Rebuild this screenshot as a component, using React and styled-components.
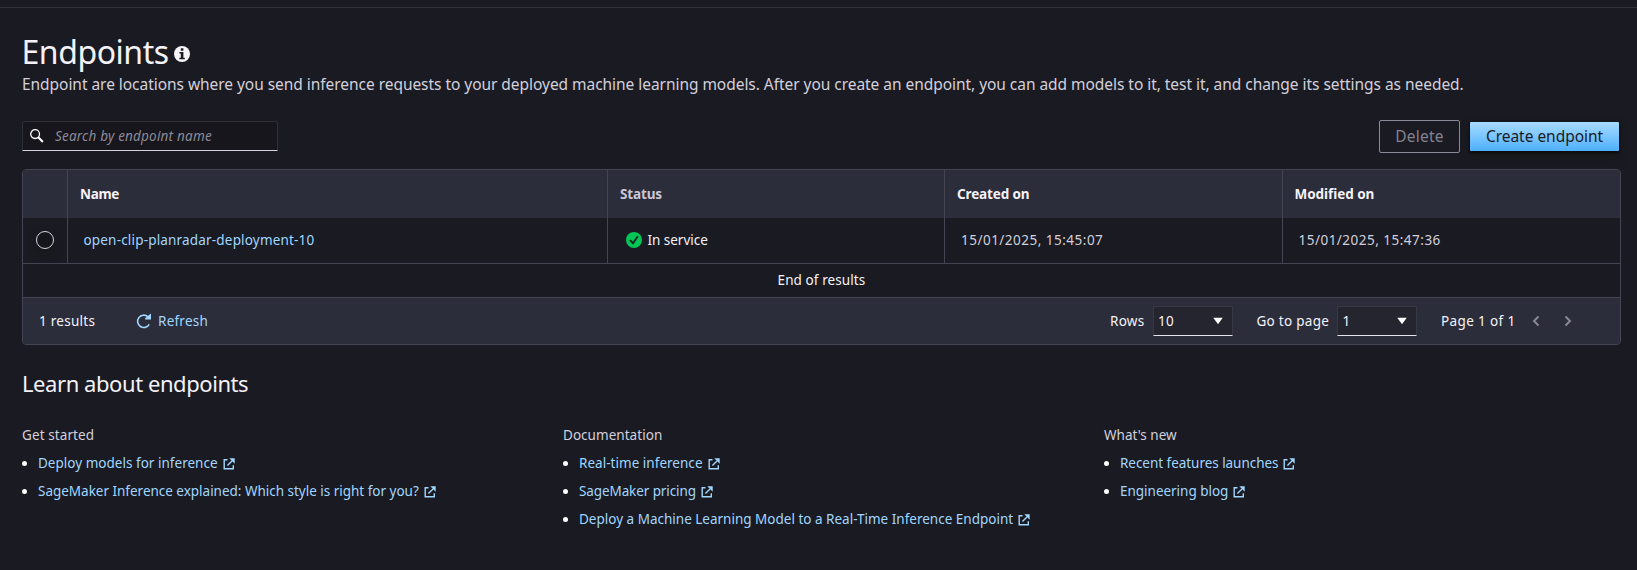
import React from "react";
import styled, { createGlobalStyle } from "styled-components";

const GlobalStyle = createGlobalStyle`
  * { box-sizing: border-box; }
  body {
    margin: 0;
    background: #1a1b22;
    color: #f4f2f8;
    font-family: "Noto Sans", "Open Sans", sans-serif;
    font-size: 13.5px;
  }
  ul { list-style: none; margin: 0; padding: 0; }
  h1, h2, h3, p { margin: 0; font-weight: 400; }
`;

const Text = styled.span`
  white-space: nowrap;
  letter-spacing: ${(p) => p.$track || 0}px;
`;

const Page = styled.div`
  min-height: 570px;
  overflow: hidden;
`;

const TopBar = styled.div`
  height: 8px;
  border-bottom: 1px solid #303136;
`;

const Content = styled.main`
  padding: 24px 16px 0 22px;
`;

const TitleRow = styled.div`
  display: flex;
  align-items: center;
  height: 40px;
  svg { margin-top: 4px; }
`;

const Title = styled.h1`
  width: 152px;
  font-size: 32px;
  line-height: 40px;
  letter-spacing: -0.45px;
  margin-left: -0.5px;
  white-space: nowrap;
`;

const Description = styled.p`
  font-size: 15.5px;
  line-height: 24px;
  letter-spacing: -0.044px;
  white-space: nowrap;
  color: #d3cfdc;
`;

const Toolbar = styled.div`
  display: flex;
  align-items: center;
  justify-content: space-between;
  height: 33px;
  margin: 24px 2px 16px 0;
`;

const SearchBox = styled.label`
  display: flex;
  align-items: center;
  gap: 11px;
  width: 256px;
  height: 30px;
  margin-bottom: 1px;
  padding: 0 7px;
  background: #16161c;
  border: 1px solid #303036;
  border-bottom-color: #d6d2de;
  border-radius: 2px 2px 0 0;
`;

const SearchInput = styled.input`
  flex: 1;
  min-width: 0;
  padding: 0;
  border: 0;
  outline: 0;
  background: transparent;
  color: #f4f2f8;
  font: inherit;
  &::placeholder {
    color: #8c8998;
    opacity: 1;
    font-style: italic;
    letter-spacing: ${(p) => p.$track}px;
  }
`;

const Actions = styled.div`
  display: flex;
  align-items: center;
  gap: 10px;
`;

const Button = styled.button`
  padding: 0 0 2px;
  font: inherit;
  font-size: 15.5px;
  white-space: nowrap;
`;

const DeleteButton = styled(Button)`
  width: 81px;
  height: 33px;
  background: transparent;
  border: 1px solid #8c8998;
  border-radius: 2px;
  color: #848191;
  letter-spacing: 0.2px;
`;

const CreateButton = styled(Button)`
  width: 149px;
  height: 29px;
  border: 0;
  border-radius: 1px;
  background: linear-gradient(#a6dbff, #4fb0ff);
  color: #1a1b22;
  letter-spacing: -0.03px;
  box-shadow: 0 1px 2px 1px #0b0c10, 0 6px 10px rgba(20, 22, 22, 0.7);
`;

const Table = styled.section`
  width: 1599px;
  border: 1px solid #454453;
  border-radius: 4px;
  overflow: hidden;
`;

const TableRow = styled.div`
  display: grid;
  grid-template-columns: 45px 540px 337px 338px 1fr;
  height: ${(p) => (p.$head ? 48 : 46)}px;
  background: ${(p) => (p.$head ? "#2c2d3a" : "transparent")};
  border-bottom: ${(p) => (p.$head ? 0 : "1px solid #454453")};
`;

const Cell = styled.div`
  display: flex;
  align-items: center;
  padding: 0 0 ${(p) => p.$lift || 0}px ${(p) => p.$indent || 0}px;
  border-right: 1px solid #454453;
  color: ${(p) => p.$color || "inherit"};
  font-weight: ${(p) => (p.$bold ? 700 : 400)};
  &:last-child { border-right: 0; }
`;

const Status = styled.span`
  display: flex;
  align-items: center;
  gap: 5.5px;
`;

const Radio = styled.span`
  width: 18px;
  height: 18px;
  border: 1px solid #d9d5e1;
  border-radius: 50%;
  background: #15161a;
  box-shadow: 0 6px 8px rgba(22, 23, 24, 0.8);
`;

const EndRow = styled.div`
  display: flex;
  align-items: center;
  justify-content: center;
  height: 34px;
  padding-bottom: 1px;
  border-bottom: 1px solid #454453;
`;

const Footer = styled.footer`
  display: flex;
  align-items: center;
  justify-content: space-between;
  height: 46px;
  padding: 0 48px 0 16px;
  background: #2c2d3a;
`;

const FooterGroup = styled.div`
  display: flex;
  align-items: center;
`;

const Results = styled.span`
  width: 97px;
  letter-spacing: 0.27px;
`;

const Refresh = styled.span`
  display: flex;
  align-items: center;
  gap: 6px;
  color: #a1d6ff;
  letter-spacing: 0.24px;
`;

const Label = styled.span`
  width: ${(p) => p.$w}px;
  letter-spacing: ${(p) => p.$track}px;
  white-space: nowrap;
`;

const Select = styled.span`
  display: flex;
  align-items: center;
  justify-content: space-between;
  width: 80px;
  height: 30px;
  margin-right: ${(p) => p.$after}px;
  padding: 0 9px 0 4.5px;
  background: #24252f;
  border: 1px solid #383843;
  border-bottom-color: #e6e2ee;
  letter-spacing: 0.4px;
`;

const Pager = styled.span`
  display: flex;
  gap: 24px;
  color: #8c8998;
`;

const SectionTitle = styled.h2`
  margin-top: 24px;
  font-size: 22px;
  line-height: 28px;
  letter-spacing: -0.43px;
`;

const Columns = styled.div`
  display: grid;
  grid-template-columns: 541px 541px 1fr;
  margin-top: 28px;
`;

const ColumnTitle = styled.h3`
  font-size: 13.5px;
  line-height: 20px;
  margin-bottom: 4px;
  color: #d3cfdc;
`;

const Item = styled.li`
  display: flex;
  align-items: center;
  height: 28px;
  line-height: 28px;
  color: #a1d6ff;
  &::before {
    content: "";
    width: 5px;
    height: 5px;
    margin: 1px 11px 0 0;
    border-radius: 50%;
    background: #fff;
  }
  svg { margin: 1px 0 0 5px; }
`;

const SearchIcon = () => (
  <svg width="14" height="14" viewBox="0 0 14 14" fill="none" stroke="#fff">
    <circle cx="5.1" cy="5.1" r="4.4" strokeWidth="1.3" />
    <path d="M8.3 8.3l4.6 4.6" strokeWidth="2.1" />
  </svg>
);

const InfoIcon = () => (
  <svg width="16" height="16" viewBox="0 0 16 16">
    <circle cx="8" cy="8" r="8" fill="#f7f5fa" />
    <path d="M6.8 2.2h2.6v2.5H6.8zM5.4 6h4v5.8h1.4v1.4H5.4v-1.4h1.4V7.4H5.4z" fill="#1a1b22" />
  </svg>
);

const CheckIcon = () => (
  <svg width="16" height="16" viewBox="0 0 16 16">
    <circle cx="8" cy="8" r="8" fill="#02c656" />
    <path d="M4 8.1l3 3.1 4.8-7" fill="none" stroke="#14251f" strokeWidth="1.9" />
  </svg>
);

const RefreshIcon = () => (
  <svg width="16" height="16" viewBox="0 0 16 16" fill="none" stroke="currentColor">
    <path d="M13.2 11.4A6.2 6.2 0 1 1 11.8 3.6" strokeWidth="1.6" />
    <path d="M15 .4v6.2H9.2V5z" fill="currentColor" stroke="none" />
  </svg>
);

const ExternalIcon = () => (
  <svg width="12" height="12" viewBox="0 0 12 12" fill="none" stroke="currentColor" strokeWidth="1.4">
    <path d="M4.5 1.7H1.2v9.1h9.1V7.3" />
    <path d="M4.4 7.6L9 3" />
    <path d="M6.3.3h5.4v5.4z" fill="currentColor" stroke="none" />
  </svg>
);

const Caret = () => (
  <svg width="10" height="8" viewBox="0 0 10 8">
    <path d="M.3.7h9.4L5 7.2z" fill="#fff" />
  </svg>
);

const Chevron = ({ right }) => (
  <svg width="8" height="12" viewBox="0 0 8 12" fill="none" stroke="currentColor" strokeWidth="1.9">
    <path d={right ? "M1.5 1.5L6 6l-4.5 4.5" : "M6.5 1.5L2 6l4.5 4.5"} />
  </svg>
);

const columns = [
  {
    title: "Get started",
    track: 0.1,
    links: [
      ["Deploy models for inference", 0.02],
      ["SageMaker Inference explained: Which style is right for you?", -0.015],
    ],
  },
  {
    title: "Documentation",
    track: 0.04,
    links: [
      ["Real-time inference", 0.03],
      ["SageMaker pricing", -0.1],
      ["Deploy a Machine Learning Model to a Real-Time Inference Endpoint", 0.003],
    ],
  },
  {
    title: "What's new",
    track: 0.02,
    links: [
      ["Recent features launches", -0.04],
      ["Engineering blog", -0.02],
    ],
  },
];

export default function App() {
  return (
    <Page>
      <GlobalStyle />
      <TopBar />
      <Content>
        <TitleRow>
          <Title>Endpoints</Title>
          <InfoIcon />
        </TitleRow>
        <Description>
          Endpoint are locations where you send inference requests to your deployed machine learning models. After you create an endpoint, you can add models to it, test it, and change its settings as needed.
        </Description>
        <Toolbar>
          <SearchBox>
            <SearchIcon />
            <SearchInput placeholder="Search by endpoint name" $track={0.2} />
          </SearchBox>
          <Actions>
            <DeleteButton disabled>Delete</DeleteButton>
            <CreateButton>Create endpoint</CreateButton>
          </Actions>
        </Toolbar>

        <Table>
          <TableRow $head>
            <Cell />
            <Cell $bold $indent={12}><Text $track={-0.3}>Name</Text></Cell>
            <Cell $bold $indent={12} $color="#cbc6d8"><Text $track={-0.15}>Status</Text></Cell>
            <Cell $bold $indent={12}><Text $track={-0.13}>Created on</Text></Cell>
            <Cell $bold $indent={11.5}><Text $track={-0.05}>Modified on</Text></Cell>
          </TableRow>
          <TableRow>
            <Cell $indent={13} $lift={1}><Radio /></Cell>
            <Cell $indent={15.5} $lift={1} $color="#a1d6ff">
              <Text $track={0.18}>open-clip-planradar-deployment-10</Text>
            </Cell>
            <Cell $indent={18} $lift={1}>
              <Status>
                <CheckIcon />
                <Text $track={-0.03}>In service</Text>
              </Status>
            </Cell>
            <Cell $indent={16} $lift={1} $color="#d3cfdc"><Text $track={0.49}>15/01/2025, 15:45:07</Text></Cell>
            <Cell $indent={15.5} $lift={1} $color="#d3cfdc"><Text $track={0.49}>15/01/2025, 15:47:36</Text></Cell>
          </TableRow>
          <EndRow><Text $track={0.09}>End of results</Text></EndRow>
          <Footer>
            <FooterGroup>
              <Results>1 results</Results>
              <Refresh><RefreshIcon />Refresh</Refresh>
            </FooterGroup>
            <FooterGroup>
              <Label $w={42.5} $track={0.25}>Rows</Label>
              <Select $after={24}>10<Caret /></Select>
              <Label $w={80.5} $track={0.28}>Go to page</Label>
              <Select $after={24}>1<Caret /></Select>
              <Label $w={91} $track={0.38}>Page 1 of 1</Label>
              <Pager><Chevron /><Chevron right /></Pager>
            </FooterGroup>
          </Footer>
        </Table>

        <SectionTitle>Learn about endpoints</SectionTitle>
        <Columns>
          {columns.map((c) => (
            <div key={c.title}>
              <ColumnTitle><Text $track={c.track}>{c.title}</Text></ColumnTitle>
              <ul>
                {c.links.map(([label, track]) => (
                  <Item key={label}>
                    <Text $track={track}>{label}</Text>
                    <ExternalIcon />
                  </Item>
                ))}
              </ul>
            </div>
          ))}
        </Columns>
      </Content>
    </Page>
  );
}
